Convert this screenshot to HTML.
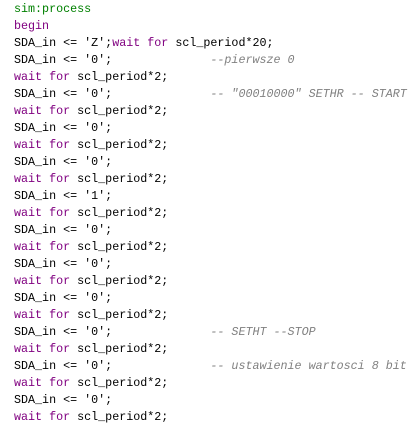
<!DOCTYPE html>
<html><head><style>
html,body{margin:0;padding:0;background:#fff;width:420px;height:423px;overflow:hidden}
#w{position:absolute;left:14px;top:1px;font-family:"Liberation Mono",monospace;font-size:11.7px;color:#000}
#w div{height:17px;line-height:17px;white-space:pre;overflow:visible}
.g{color:#008000}.k{color:#800080}.c{color:#808080;font-style:italic}
</style></head><body><div id="w">
<div><span class="g">sim:process</span></div>
<div><span class="k">begin</span></div>
<div>SDA_in &lt;= 'Z';<span class="k">wait for</span> scl_period*20;</div>
<div>SDA_in &lt;= '0';              <span class="c">--pierwsze 0</span></div>
<div><span class="k">wait for</span> scl_period*2;</div>
<div>SDA_in &lt;= '0';              <span class="c">-- "00010000" SETHR -- START</span></div>
<div><span class="k">wait for</span> scl_period*2;</div>
<div>SDA_in &lt;= '0';</div>
<div><span class="k">wait for</span> scl_period*2;</div>
<div>SDA_in &lt;= '0';</div>
<div><span class="k">wait for</span> scl_period*2;</div>
<div>SDA_in &lt;= '1';</div>
<div><span class="k">wait for</span> scl_period*2;</div>
<div>SDA_in &lt;= '0';</div>
<div><span class="k">wait for</span> scl_period*2;</div>
<div>SDA_in &lt;= '0';</div>
<div><span class="k">wait for</span> scl_period*2;</div>
<div>SDA_in &lt;= '0';</div>
<div><span class="k">wait for</span> scl_period*2;</div>
<div>SDA_in &lt;= '0';              <span class="c">-- SETHT --STOP</span></div>
<div><span class="k">wait for</span> scl_period*2;</div>
<div>SDA_in &lt;= '0';              <span class="c">-- ustawienie wartosci 8 bit</span></div>
<div><span class="k">wait for</span> scl_period*2;</div>
<div>SDA_in &lt;= '0';</div>
<div><span class="k">wait for</span> scl_period*2;</div>
</div></body></html>
